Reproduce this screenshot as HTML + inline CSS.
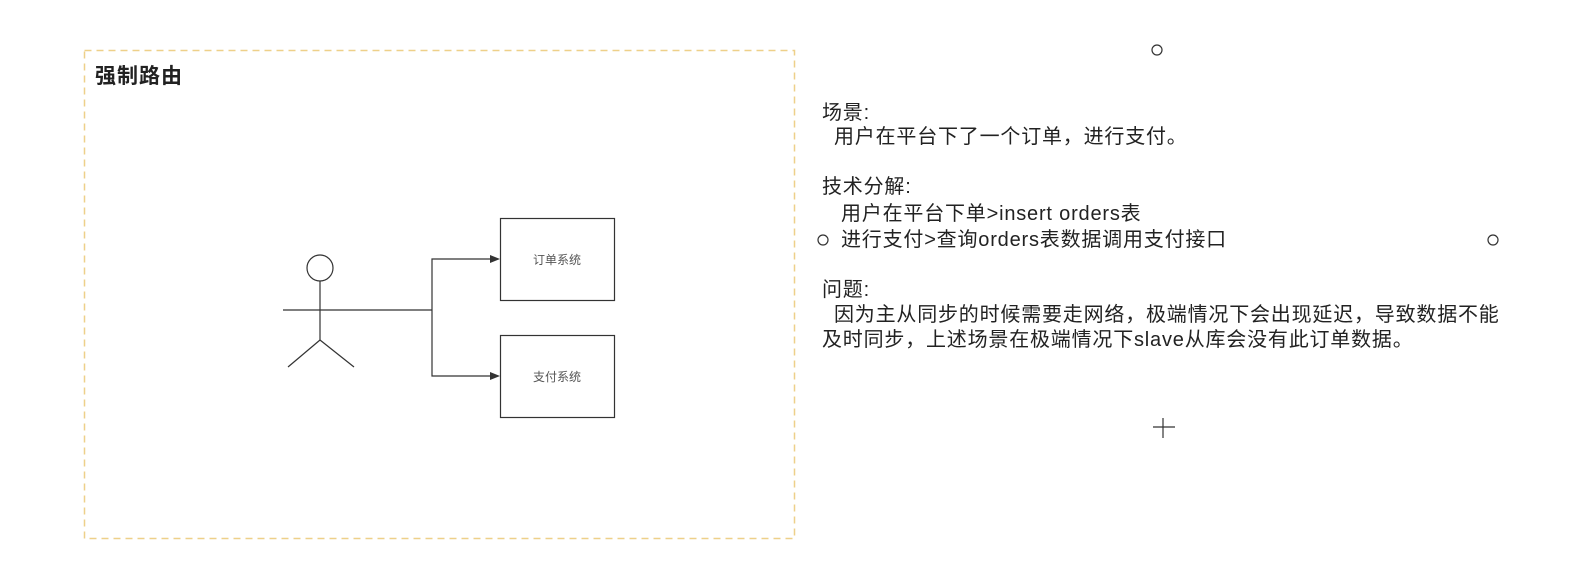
<!DOCTYPE html>
<html><head><meta charset="utf-8"><style>
body{margin:0;width:1588px;height:584px;background:#fff;position:relative;overflow:hidden;font-family:"Liberation Sans","Noto Sans CJK SC",sans-serif;}
.t{position:absolute;font-size:20px;color:#222;white-space:nowrap;line-height:24px;letter-spacing:0.8px;}
</style></head><body>
<svg width="1588" height="584" style="position:absolute;left:0;top:0">
<rect x="84.5" y="50.5" width="710" height="488" fill="none" stroke="#eed089" stroke-width="1.5" stroke-dasharray="7,5"/>
<g stroke="#333" stroke-width="1.2" fill="none">
<circle cx="320" cy="268" r="13"/>
<line x1="320" y1="281" x2="320" y2="340"/>
<line x1="283" y1="310" x2="432" y2="310"/>
<line x1="320" y1="340" x2="288" y2="367"/>
<line x1="320" y1="340" x2="354" y2="367"/>
<polyline points="432,310 432,259 494,259"/>
<polyline points="432,310 432,376 494,376"/>
<rect x="500.5" y="218.5" width="114" height="82"/>
<rect x="500.5" y="335.5" width="114" height="82"/>
<circle cx="1157" cy="50" r="5"/>
<circle cx="823" cy="240" r="5"/>
<circle cx="1493" cy="240" r="5"/>
<line x1="1163" y1="418" x2="1163" y2="438"/>
<line x1="1153" y1="427" x2="1175" y2="427"/>
</g>
<polygon points="500,259 490,255 490,263" fill="#333"/>
<polygon points="500,376 490,372 490,380" fill="#333"/>
<text x="557" y="264" font-size="12" fill="#555" text-anchor="middle" font-family="Liberation Sans,Noto Sans CJK SC,sans-serif">订单系统</text>
<text x="557" y="381" font-size="12" fill="#555" text-anchor="middle" font-family="Liberation Sans,Noto Sans CJK SC,sans-serif">支付系统</text>
</svg>
<div class="t" style="left:95px;top:64px;font-size:21px;font-weight:bold;letter-spacing:1px;line-height:26px">强制路由</div>
<div class="t" style="left:822px;top:101px">场景:</div>
<div class="t" style="left:834px;top:125px">用户在平台下了一个订单，进行支付。</div>
<div class="t" style="left:822px;top:175px">技术分解:</div>
<div class="t" style="left:841px;top:202px">用户在平台下单&gt;insert orders表</div>
<div class="t" style="left:841px;top:228px">进行支付&gt;查询orders表数据调用支付接口</div>
<div class="t" style="left:822px;top:278px">问题:</div>
<div class="t" style="left:834px;top:303px">因为主从同步的时候需要走网络，极端情况下会出现延迟，导致数据不能</div>
<div class="t" style="left:822px;top:328px">及时同步，上述场景在极端情况下slave从库会没有此订单数据。</div>
</body></html>
